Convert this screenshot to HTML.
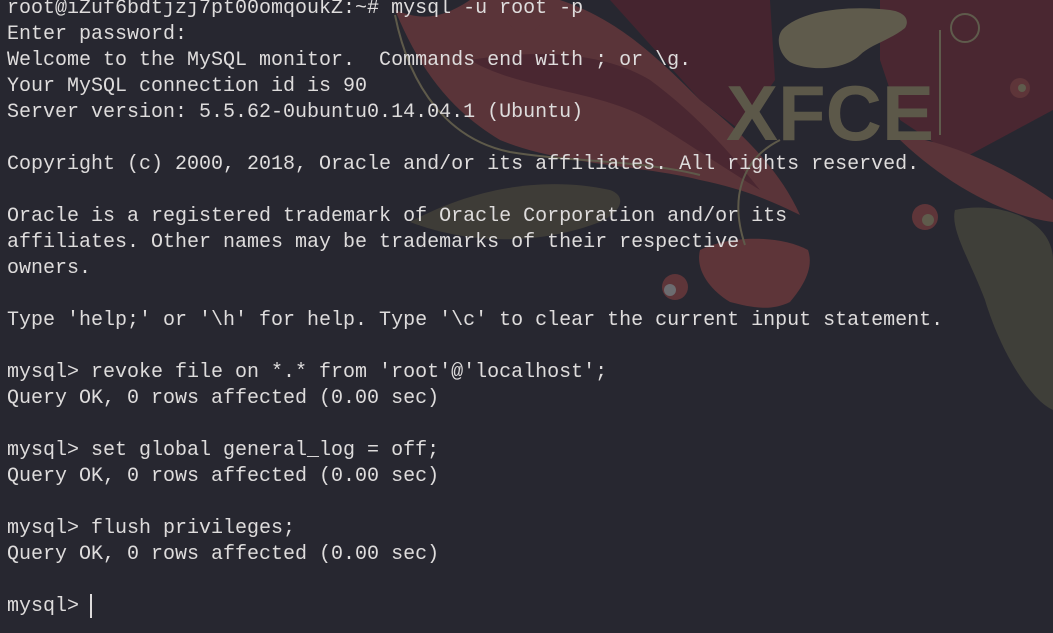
<!DOCTYPE html>
<html><head><meta charset="utf-8"><style>
html,body{margin:0;padding:0;width:1053px;height:633px;overflow:hidden;background:#272730;}
svg{position:absolute;left:0;top:0}
pre{position:absolute;left:7px;top:-4px;margin:0;font-family:"Liberation Mono","DejaVu Sans Mono",monospace;font-size:20px;line-height:26px;color:#dedcdc;white-space:pre;}
.cur{position:absolute;left:90px;top:594px;width:2px;height:24px;background:#dedcdc}
</style></head><body>
<svg width="1053" height="633" viewBox="0 0 1053 633">
<path d="M610 0 L770 0 L775 80 L740 130 L700 100 Z" fill="#45242f"/>
<path d="M880 0 L1053 0 L1053 110 L960 160 L900 120 L880 60 Z" fill="#4a2731"/>
<path d="M395 10 C420 70 450 110 500 140 C560 165 640 165 700 180 C740 188 770 200 800 215 C780 170 740 130 700 100 C660 60 620 20 560 0 L470 0 C440 20 420 20 395 10 Z" fill="#5a3439"/>
<path d="M470 60 C520 90 600 90 650 120 C690 145 720 165 760 190 C720 140 690 110 650 80 C600 50 530 50 470 60 Z" fill="#4a2731"/>
<path d="M395 15 C410 90 450 140 510 152 C570 162 640 160 700 175" fill="none" stroke="#5e5a4a" stroke-width="2"/>
<circle cx="525" cy="15" r="18" fill="#5a3439"/>
<path d="M410 222 C470 190 540 175 610 190 C625 195 625 210 600 222 C540 245 470 245 410 222 Z" fill="#3e3c37"/>
<path d="M700 250 C730 235 780 235 808 250 C815 270 800 290 790 302 C770 312 750 307 730 302 C710 290 695 270 700 250 Z" fill="#5e3539"/>
<path d="M745 245 C730 200 740 160 780 140" fill="none" stroke="#5e5a4a" stroke-width="2"/>
<path d="M895 135 C950 140 1010 170 1053 200 L1053 222 C1000 215 940 180 895 135 Z" fill="#5a3439"/>
<path d="M955 210 C1000 200 1053 220 1053 260 L1053 410 C1030 400 1000 350 985 300 C970 260 950 230 955 210 Z" fill="#3f3f39"/>
<circle cx="675" cy="287" r="13" fill="#5e3539"/><circle cx="670" cy="290" r="6" fill="#6c6c70"/>
<circle cx="925" cy="217" r="13" fill="#5e3539"/><circle cx="928" cy="220" r="6" fill="#5f5b4c"/>
<circle cx="1020" cy="88" r="10" fill="#5e3539"/><circle cx="1022" cy="88" r="4" fill="#5f5b4c"/>
<path d="M782 30 C800 10 850 5 890 10 C905 12 910 20 905 28 C890 40 870 45 860 55 C845 70 810 72 790 62 C780 55 775 40 782 30 Z" fill="#5f5b4c"/>
<circle cx="965" cy="28" r="14" fill="none" stroke="#5f5b4c" stroke-width="2"/>
<path d="M940 30 L940 135" stroke="#5f5b4c" stroke-width="2"/>
<text x="726" y="140" font-family="Liberation Sans,sans-serif" font-weight="bold" font-size="78" fill="#5c5849">XFCE</text>
</svg>
<pre>root@iZuf6bdtjzj7pt00omqoukZ:~# mysql -u root -p
Enter password:
Welcome to the MySQL monitor.  Commands end with ; or \g.
Your MySQL connection id is 90
Server version: 5.5.62-0ubuntu0.14.04.1 (Ubuntu)

Copyright (c) 2000, 2018, Oracle and/or its affiliates. All rights reserved.

Oracle is a registered trademark of Oracle Corporation and/or its
affiliates. Other names may be trademarks of their respective
owners.

Type 'help;' or '\h' for help. Type '\c' to clear the current input statement.

mysql> revoke file on *.* from 'root'@'localhost';
Query OK, 0 rows affected (0.00 sec)

mysql> set global general_log = off;
Query OK, 0 rows affected (0.00 sec)

mysql> flush privileges;
Query OK, 0 rows affected (0.00 sec)

mysql> </pre>
<div class="cur"></div>
</body></html>
